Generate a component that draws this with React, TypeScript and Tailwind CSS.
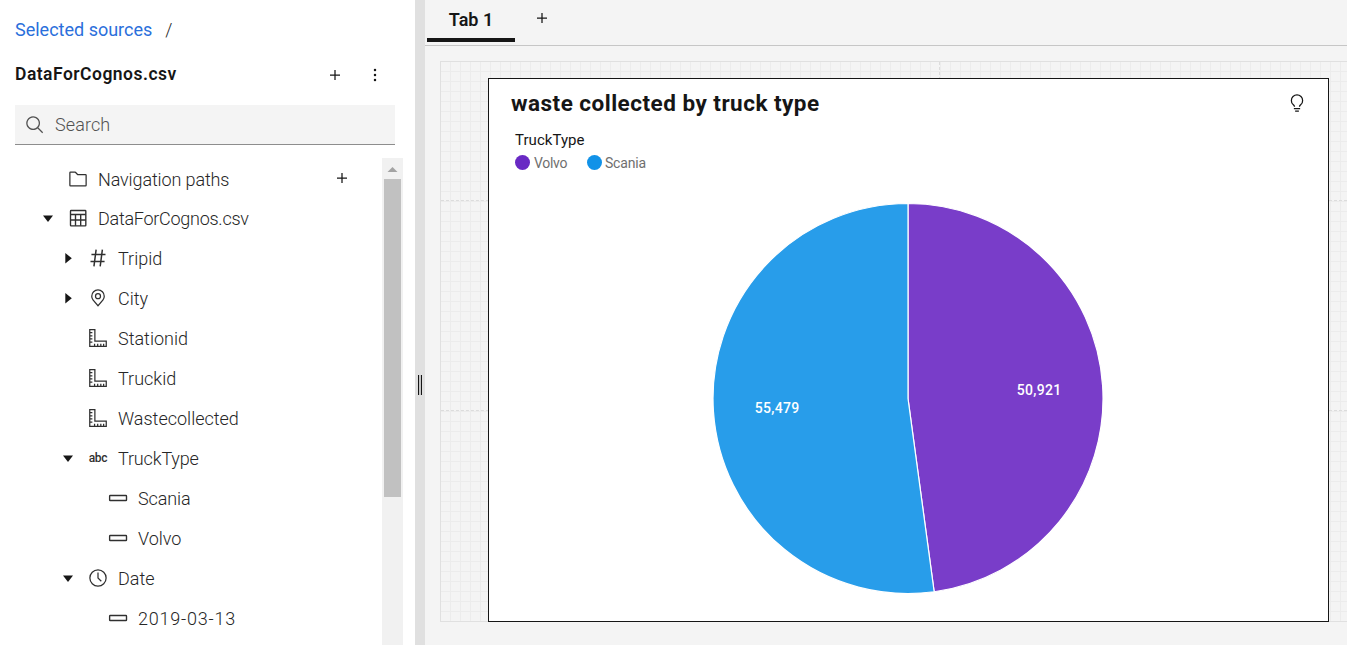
import React from "react";

type IconProps = { className?: string; children: React.ReactNode };

const Icon = ({ className = "size-5", children }: IconProps) => (
  <svg viewBox="0 0 32 32" fill="currentColor" className={`shrink-0 ${className}`} aria-hidden="true">
    {children}
  </svg>
);

const AddIcon = () => (
  <Icon>
    <path d="M17 15V8h-2v7H8v2h7v7h2v-7h7v-2z" />
  </Icon>
);

const MoreIcon = () => (
  <Icon>
    <circle cx="16" cy="8" r="2" />
    <circle cx="16" cy="16" r="2" />
    <circle cx="16" cy="24" r="2" />
  </Icon>
);

const SearchIcon = () => (
  <Icon>
    <path d="M29,27.5859l-7.5521-7.5521a11.0177,11.0177,0,1,0-1.4141,1.4141L27.5859,29ZM4,13a9,9,0,1,1,9,9A9.01,9.01,0,0,1,4,13Z" />
  </Icon>
);

const FolderIcon = () => (
  <Icon>
    <path d="M11.17,6l3.42,3.41.58.59H28V26H4V6h7.17m0-2H4A2,2,0,0,0,2,6V26a2,2,0,0,0,2,2H28a2,2,0,0,0,2-2V10a2,2,0,0,0-2-2H16L12.59,4.59A2,2,0,0,0,11.17,4Z" />
  </Icon>
);

const TableIcon = () => (
  <Icon>
    <g fill="none" stroke="currentColor" strokeWidth="2.200">
      <rect x="4" y="4" width="24.500" height="24.500" rx="1" />
      <path d="M4 10.400h24.500M4 19.200h24.500M12 10.400V28.500M20.300 10.400V28.500" />
    </g>
  </Icon>
);

const HashIcon = () => (
  <Icon>
    <path
      fill="none"
      stroke="currentColor"
      strokeWidth="2.400"
      d="M13 2.500 9.500 29.500M23 2.500 19.500 29.500M5.500 10.500H28M4 21.500H26.500"
    />
  </Icon>
);

const PinIcon = () => (
  <Icon>
    <path d="M16,18a5,5,0,1,1,5-5A5,5,0,0,1,16,18Zm0-8a3,3,0,1,0,3,3A3,3,0,0,0,16,10Z" />
    <path d="M16,30,7.5645,20.0513c-.0479-.0571-.3482-.4515-.3482-.4515A10.8888,10.8888,0,0,1,5,13a11,11,0,0,1,22,0,10.8844,10.8844,0,0,1-2.2148,6.5973s-.3.3944-.3447.4474ZM8.8125,18.395c.001.0007.2334.3082.2866.3744L16,26.9079l6.91-8.15c.0439-.0552.2783-.3649.2788-.3657A8.901,8.901,0,0,0,25,13,9,9,0,1,0,7,13a8.9054,8.9054,0,0,0,1.8125,5.395Z" />
  </Icon>
);

const RulerIcon = () => (
  <Icon>
    <path
      fill="none"
      stroke="currentColor"
      strokeWidth="2"
      d="M2.800 2.500H11V21H29.200V29.500H2.800ZM3 7.500h4M3 12.500h4M3 17.500h4M3 22.500h4M10.500 29v-4M15.500 29v-4M20.500 29v-4M25 29v-4"
    />
  </Icon>
);

const ValueIcon = () => (
  <Icon>
    <rect x="2.600" y="12" width="27" height="8" rx="1" fill="none" stroke="currentColor" strokeWidth="2.200" />
  </Icon>
);

const ClockIcon = () => (
  <Icon>
    <path d="M16,30A14,14,0,1,1,30,16,14,14,0,0,1,16,30ZM16,4A12,12,0,1,0,28,16,12,12,0,0,0,16,4Z" />
    <path d="M20.590 22 15 16.410V7h2v8.580l5 5.010z" />
  </Icon>
);

const BulbIcon = () => (
  <Icon>
    <path d="M11 24H21V26H11zM13 28H19V30H13z" />
    <path d="M16,2A10,10,0,0,0,6,12a9.19,9.19,0,0,0,3.46,7.62c1,.93,1.54,1.46,1.54,2.38h2c0-1.84-1.11-2.87-2.19-3.86A7.2,7.2,0,0,1,8,12a8,8,0,0,1,16,0,7.2,7.2,0,0,1-2.82,6.14c-1.07,1-2.18,2-2.18,3.86h2c0-.92.53-1.45,1.54-2.39A9.18,9.18,0,0,0,26,12,10,10,0,0,0,16,2Z" />
  </Icon>
);

const TextIcon = () => (
  <span className="w-5 shrink-0 text-center text-[12px] leading-5 font-medium tracking-[-0.3px]">abc</span>
);

const Caret = ({ open }: { open: boolean }) => (
  <svg viewBox="0 0 20 20" className="size-5 shrink-0 fill-[#161616]" aria-hidden="true">
    <path d={open ? "M5 6.500h10l-5 6.500z" : "M7.300 4v10.500l6.500-5.250z"} />
  </svg>
);

type Row = {
  label: string;
  icon: React.ReactNode;
  indent: string;
  iconPad?: string;
  open?: boolean;
  add?: boolean;
  text?: string;
};

const rows: Row[] = [
  { label: "Navigation paths", icon: <FolderIcon />, indent: "pl-[38px]", iconPad: "pb-0", add: true, text: "pt-[2px] tracking-[-0.12px]" },
  { label: "DataForCognos.csv", icon: <TableIcon />, indent: "pl-[38px]", open: true, text: "tracking-[-0.27px]" },
  { label: "Tripid", icon: <HashIcon />, indent: "pl-[58px]", open: false },
  { label: "City", icon: <PinIcon />, indent: "pl-[58px]", open: false },
  { label: "Stationid", icon: <RulerIcon />, indent: "pl-[58px]" },
  { label: "Truckid", icon: <RulerIcon />, indent: "pl-[58px]" },
  { label: "Wastecollected", icon: <RulerIcon />, indent: "pl-[58px]" },
  { label: "TruckType", icon: <TextIcon />, indent: "pl-[58px]", open: true, text: "tracking-[-0.15px]" },
  { label: "Scania", icon: <ValueIcon />, indent: "pl-[78px]", text: "tracking-[-0.1px]" },
  { label: "Volvo", icon: <ValueIcon />, indent: "pl-[78px]" },
  { label: "Date", icon: <ClockIcon />, indent: "pl-[58px]", open: true },
  { label: "2019-03-13", icon: <ValueIcon />, indent: "pl-[78px]", text: "tracking-[0.78px]" },
];

const TreeRow = ({ label, icon, indent, iconPad = "pb-[2px]", open, add, text = "" }: Row) => (
  <li className={`flex h-10 items-center pr-[30px] ${indent}`}>
    {open === undefined ? <span className="w-5 shrink-0" /> : <Caret open={open} />}
    <span className={`ml-[10px] flex text-[#303030] ${iconPad}`}>{icon}</span>
    <span className={`ml-[10px] flex-1 text-[18px] leading-6 font-light whitespace-nowrap text-[#262626] ${text}`}>{label}</span>
    {add && (
      <span className="pb-[2px]">
        <AddIcon />
      </span>
    )}
  </li>
);

const SourcesPanel = () => (
  <aside className="flex w-[415px] shrink-0 flex-col bg-white">
    <div className="flex h-[60px] items-center pl-[15px] text-[18px] leading-6">
      <span className="font-normal text-[#2a6fdb]">Selected sources</span>
      <span className="ml-[13px] font-light text-[#262626]">/</span>
    </div>
    <div className="flex h-[45px] items-start pl-[15px]">
      <h2 className="flex-1 pt-[2px] text-[17.500px] leading-6 font-semibold tracking-[0.48px]">DataForCognos.csv</h2>
      <div className="flex gap-5 pt-[5px] pr-[30px]">
        <AddIcon />
        <MoreIcon />
      </div>
    </div>
    <div className="ml-[15px] flex h-10 w-[380px] items-center border-b border-[#8d8d8d] bg-[#f4f4f4] pl-[10px] text-[#525252]">
      <SearchIcon />
      <span className="ml-[10px] text-[18px] leading-6 font-light tracking-[0.1px] text-[#525252]">Search</span>
    </div>
    <div className="mt-[13px] flex min-h-0 flex-1">
      <ul className="min-w-0 flex-1 overflow-hidden pt-px">
        {rows.map((row, i) => (
          <TreeRow key={i} {...row} />
        ))}
      </ul>
      <div className="mr-3 flex w-[21px] flex-col bg-[#f1f1f1] pr-[2px] pl-[2px]">
        <svg viewBox="0 0 17 21" className="h-[21px] w-[17px] fill-[#a3a3a3]" aria-hidden="true">
          <path d="M3.500 14h10L8.500 9z" />
        </svg>
        <div className="h-[318px] bg-[#c1c1c1]" />
      </div>
    </div>
  </aside>
);

const PieChart = () => (
  <svg viewBox="0 0 839 542" className="absolute inset-0 h-[542px] w-[839px]" aria-hidden="true">
    <g stroke="#fff" strokeWidth="1.200" strokeLinejoin="round">
      <path fill="#793dc9" d="M419 319.500V124.500A195 195 0 0 1 445.160 512.740Z" />
      <path fill="#289dea" d="M419 319.500L445.160 512.740A195 195 0 1 1 419 124.500Z" />
    </g>
    <g className="text-[14px] font-medium" fill="#fff" textAnchor="middle">
      <text x="550" y="316" textLength="44.500">50,921</text>
      <text x="288" y="334" textLength="44.500">55,479</text>
    </g>
  </svg>
);

const ChartCard = () => (
  <section className="relative h-[544px] w-[841px] border border-[#161616] bg-white">
    <PieChart />
    <div className="flex items-start justify-between pt-[8px] pr-[21px] pl-[22px]">
      <h1 className="text-[22.500px] leading-8 font-bold tracking-[0.48px]">waste collected by truck type</h1>
      <div className="pt-[6px]">
        <BulbIcon />
      </div>
    </div>
    <div className="pt-[11px] pl-[26px]">
      <p className="text-[15px] leading-5 tracking-[0.05px]">TruckType</p>
      <div className="mt-[3px] flex items-center text-[14px] leading-[18px] text-[#6f6f6f]">
        <span className="mr-1 size-[15px] rounded-full bg-[#6929c4]" />
        <span className="w-[53px] pt-px tracking-[-0.3px]">Volvo</span>
        <span className="mr-[3px] size-[15px] rounded-full bg-[#1192e8]" />
        <span className="pt-px tracking-[-0.2px]">Scania</span>
      </div>
    </div>
  </section>
);

const gridCls =
  "bg-[repeating-linear-gradient(to_right,transparent_0px,transparent_9px,#ececec_9px,#ececec_10px),repeating-linear-gradient(to_bottom,transparent_0px,transparent_9px,#ececec_9px,#ececec_10px)]";

const Dashboard = () => (
  <main className="flex min-w-0 flex-1 flex-col bg-[#f4f4f4]">
    <div className="flex h-[46px] shrink-0 items-start border-b border-[#c6c6c6] pl-[2px]">
      <div className="flex h-[42px] w-[88px] items-center justify-center border-b-4 border-[#161616] pt-[2px] text-[18px] leading-6 font-semibold">
        Tab 1
      </div>
      <div className="pt-[8px] pl-[17px]">
        <AddIcon />
      </div>
    </div>
    <div className={`relative mt-[15px] ml-[15px] h-[561px] border-y border-l border-[#e0e0e0] pt-4 pl-[47px] ${gridCls}`}>
      <div className="absolute inset-x-0 top-[138px] border-t border-dashed border-[#dcdcdc]" />
      <div className="absolute inset-x-0 top-[348px] border-t border-dashed border-[#dcdcdc]" />
      <div className="absolute inset-y-0 left-[498px] border-l border-dashed border-[#dcdcdc]" />
      <ChartCard />
    </div>
  </main>
);

export default function App() {
  return (
    <div className="flex h-[645px] w-[1347px] overflow-hidden bg-white font-['Roboto',sans-serif] text-[#161616]">
      <SourcesPanel />
      <div className="flex w-[10px] shrink-0 bg-[#e0e0e0] pt-[375px] pl-[3px]">
        <div className="h-5 w-[4px] border-x border-[#161616] bg-[#c6c6c6]" />
      </div>
      <Dashboard />
    </div>
  );
}
